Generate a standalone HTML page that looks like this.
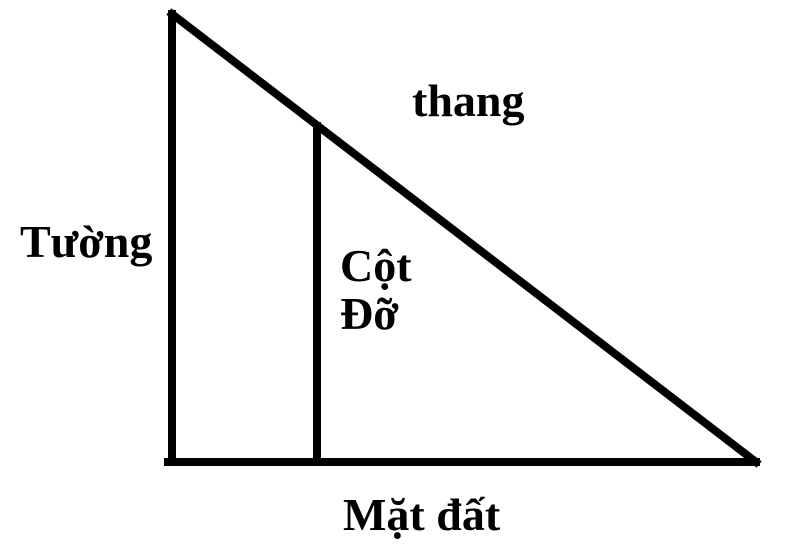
<!DOCTYPE html>
<html><head><meta charset="utf-8"><style>
html,body{margin:0;padding:0;background:#fff;width:812px;height:549px;overflow:hidden}
svg{display:block}
text{font-family:"Liberation Serif",serif;font-weight:bold;fill:#000;font-size:46px}
</style></head><body>
<svg width="812" height="549" viewBox="0 0 812 549">
<g stroke="#000" stroke-width="8" fill="none" stroke-linecap="square">
<line x1="172" y1="14" x2="172" y2="462"/>
<line x1="168" y1="462" x2="756" y2="462"/>
<line x1="172" y1="14" x2="756" y2="462"/>
<line x1="317" y1="126" x2="317" y2="462"/>
</g>
<text x="412" y="116">thang</text>
<text x="20" y="257">Tường</text>
<text x="340" y="281">Cột</text>
<text x="340" y="329">Đỡ</text>
<text x="343" y="530">Mặt đất</text>
</svg>
</body></html>
